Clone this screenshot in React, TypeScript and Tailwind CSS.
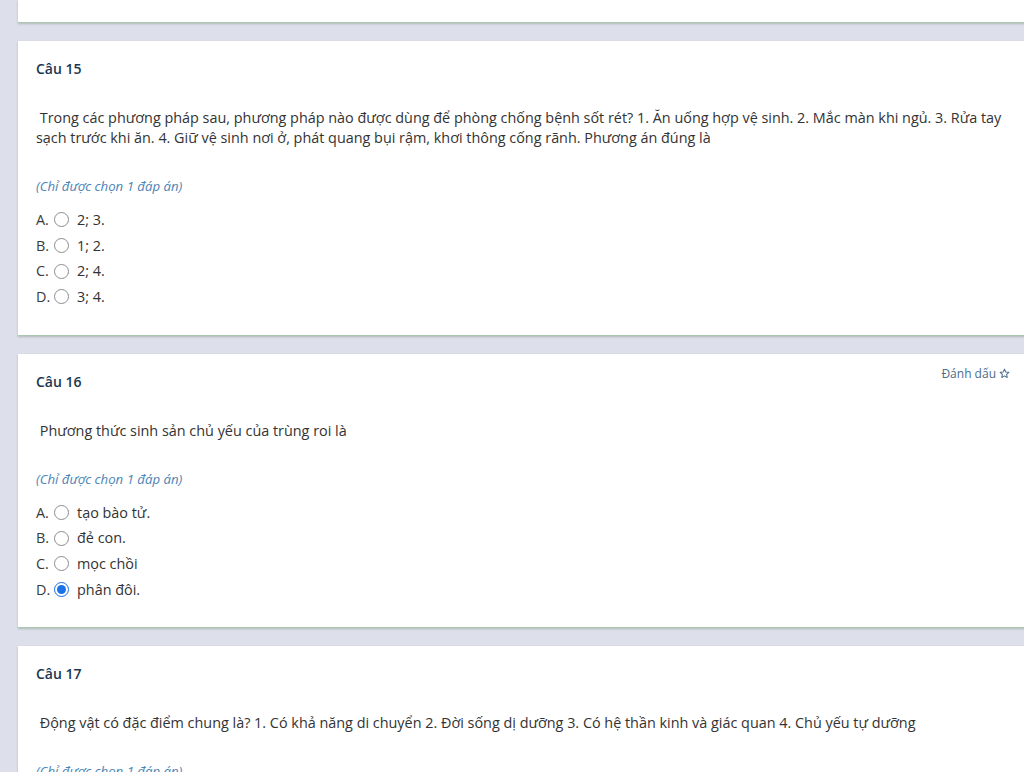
import React from "react";

type Q = {
  num: number;
  text: string;
  options: string[];
  selected?: number;
  mark?: boolean;
};

const questions: Q[] = [
  {
    num: 15,
    text:
      " Trong các phương pháp sau, phương pháp nào được dùng để phòng chống bệnh sốt rét? 1. Ăn uống hợp vệ sinh. 2. Mắc màn khi ngủ. 3. Rửa tay sạch trước khi ăn. 4. Giữ vệ sinh nơi ở, phát quang bụi rậm, khơi thông cống rãnh. Phương án đúng là",
    options: ["2; 3.", "1; 2.", "2; 4.", "3; 4."],
  },
  {
    num: 16,
    text: " Phương thức sinh sản chủ yếu của trùng roi là",
    options: ["tạo bào tử.", "đẻ con.", "mọc chồi", "phân đôi."],
    selected: 3,
    mark: true,
  },
  {
    num: 17,
    text:
      " Động vật có đặc điểm chung là? 1. Có khả năng di chuyển 2. Đời sống dị dưỡng 3. Có hệ thần kinh và giác quan 4. Chủ yếu tự dưỡng",
    options: ["", "", "", ""],
  },
];

const letters = ["A.", "B.", "C.", "D."];

function Radio({ checked }: { checked?: boolean }) {
  if (checked) {
    return (
      <span className="w-[15px] h-[15px] rounded-full border-[1.5px] border-[#1a6fe0] flex items-center justify-center bg-white">
        <span className="w-[9px] h-[9px] rounded-full bg-[#1a73e8]" />
      </span>
    );
  }
  return <span className="w-[15px] h-[15px] rounded-full border border-[#8d8d8d] bg-white" />;
}

function Card({ q }: { q: Q }) {
  return (
    <div className="relative bg-white w-[1010px] border-b border-[#a9c8ae] shadow-[0_1px_2px_rgba(90,110,95,0.35)] px-[18px] pt-[18px] pb-[25px]">
      {q.mark && (
        <div className="absolute right-[18px] top-[10px] text-[12px] leading-[20px] text-[#4a6d8c] flex items-center gap-[3px]">
          <span>Đánh dấu</span>
          <svg width="11" height="11" viewBox="0 0 24 24" fill="none" stroke="#4a6d8c" strokeWidth="2.2" strokeLinejoin="round">
            <path d="M12 2.5l2.9 6.1 6.6.8-4.9 4.6 1.3 6.6L12 17.3l-5.9 3.3 1.3-6.6-4.9-4.6 6.6-.8z" />
          </svg>
        </div>
      )}
      <div className="text-[14px] leading-[20px] font-semibold text-[#1d3650]">Câu {q.num}</div>
      <div className="mt-[29px] text-[14.4px] leading-[20px] text-[#333333] whitespace-pre-wrap">{q.text}</div>
      <div className="mt-[28px] text-[13.2px] leading-[20px] italic text-[#4b84b6]">(Chỉ được chọn 1 đáp án)</div>
      <div className="mt-[11px] flex flex-col">
        {q.options.map((o, i) => (
          <div key={i} className="h-[25.67px] flex items-center text-[14.4px] text-[#333333]">
            <span className="w-[18px] text-[#3a3a3a]">{letters[i]}</span>
            <Radio checked={q.selected === i} />
            <span className="ml-[8px]">{o}</span>
          </div>
        ))}
      </div>
    </div>
  );
}

export default function App() {
  return (
    <div
      className="w-[1024px] h-[772px] overflow-hidden bg-[#dde0ea] pl-[18px]"
      style={{ fontFamily: '"Open Sans", "Noto Sans", sans-serif' }}
    >
      <div className="flex flex-col gap-[18px]">
        <div className="bg-white w-[1010px] h-[23px] border-b border-[#a9c8ae] shadow-[0_1px_2px_rgba(90,110,95,0.35)]" />
        {questions.map((q) => (
          <Card key={q.num} q={q} />
        ))}
      </div>
    </div>
  );
}
